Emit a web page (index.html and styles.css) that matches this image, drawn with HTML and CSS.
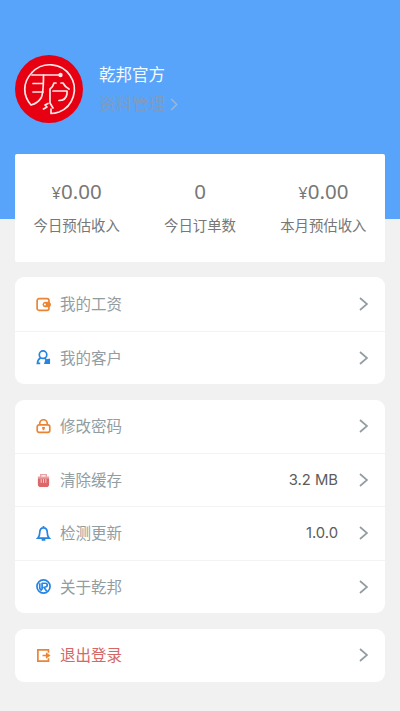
FILE: index.html
```html
<!DOCTYPE html>
<html lang="zh-CN">
<head>
<meta charset="utf-8">
<meta name="viewport" content="width=device-width, initial-scale=1">
<title>我的</title>
<link rel="stylesheet" href="styles.css">
</head>
<body>
<header class="hero">
  <svg class="avatar" viewBox="0 0 68 68" aria-hidden="true">
    <circle cx="34" cy="34" r="34" fill="#e60012"/>
    <g fill="none" stroke="#ffe9e6" stroke-width="1.7" stroke-linecap="round" stroke-linejoin="round">
      <path d="M17 17.500A24.500 24.500 0 1 1 44 57Q40 58.500 36 58.500V54"/>
      <path d="M17 17.500C7 28 8 41 16 50Q23 48 26 43Q28.500 39 28.500 20"/>
      <path d="M17 20H45M18 28.500H28M18 37H28"/>
      <path d="M41 28H39Q38 32 35 34V48L38 53M46 28H48Q50 32 54 34M38 36H52V39Q51 45.500 44 45.500"/>
      <path d="M33 48.500L30 50L32 52L28.500 54"/>
    </g>
    <circle cx="45.500" cy="20" r="2.200" fill="#ffe9e6"/>
  </svg>
  <div class="profile">
    <div class="name">乾邦官方</div>
    <div class="manage">资料管理<svg class="manage-arrow" viewBox="0 0 8 14"><path d="M1 1l6 6-6 6"/></svg></div>
  </div>
</header>
<main class="content">
  <section class="stats">
    <div class="stat"><div class="amount"><span class="yen">¥</span>0.00</div><div class="caption">今日预估收入</div></div>
    <div class="stat"><div class="amount">0</div><div class="caption">今日订单数</div></div>
    <div class="stat"><div class="amount"><span class="yen">¥</span>0.00</div><div class="caption">本月预估收入</div></div>
  </section>

  <section class="group">
    <div class="row">
      <svg class="icon orange" viewBox="0 0 16 16"><rect x="1.200" y="1.800" width="12.600" height="12.400" rx="2"/><path class="solid" d="M9.500 5H14q2 1 2 3t-2 3H9.500Q7 10.500 7 8t2.500-3z"/><circle cx="9.500" cy="8" r="1" fill="#fff" stroke="none"/></svg>
      <span class="label">我的工资</span>
      <svg class="arrow" viewBox="0 0 9 14"><path d="M1 1l7 6-7 6"/></svg>
    </div>
    <div class="row">
      <svg class="icon blue" viewBox="0 0 16 16"><circle cx="7.500" cy="5" r="4"/><path d="M5 8.200Q1.800 10 1.500 14.200H4.500M9 8.500l2 2"/><path class="solid" d="M10 10l5-1v6H8.500z"/></svg>
      <span class="label">我的客户</span>
      <svg class="arrow" viewBox="0 0 9 14"><path d="M1 1l7 6-7 6"/></svg>
    </div>
  </section>

  <section class="group">
    <div class="row">
      <svg class="icon orange" viewBox="0 0 16 16"><rect x="1.300" y="6.300" width="13.400" height="8" rx="2"/><path d="M4 6V4.800a4 4 0 0 1 8 0V6M8 8.500v3.500M6.500 9.500h3"/></svg>
      <span class="label">修改密码</span>
      <svg class="arrow" viewBox="0 0 9 14"><path d="M1 1l7 6-7 6"/></svg>
    </div>
    <div class="row">
      <svg class="icon red" viewBox="0 0 16 16"><path class="solid" d="M2 5.500h12V12q0 3-3 3H5Q2 15 2 12z"/><path class="lid" d="M2 4.500h12M5 4V1.800h6V4"/><path class="slots" d="M5.500 6.500v4M8 6.500v4M10.500 6.500v4"/></svg>
      <span class="label">清除缓存</span>
      <span class="value">3.2 MB</span>
      <svg class="arrow" viewBox="0 0 9 14"><path d="M1 1l7 6-7 6"/></svg>
    </div>
    <div class="row">
      <svg class="icon blue" viewBox="0 0 16 16"><path d="M8 0v2M2 13Q4 11 4 7Q4 2 8 2T12 7Q12 11 14 13zM6 14.800h4"/></svg>
      <span class="label">检测更新</span>
      <span class="value">1.0.0</span>
      <svg class="arrow" viewBox="0 0 9 14"><path d="M1 1l7 6-7 6"/></svg>
    </div>
    <div class="row">
      <svg class="icon blue" viewBox="0 0 16 16"><circle cx="8" cy="8" r="7"/><path d="M4 4.500V10l2 2.500M6.500 4v7.500M6.500 4.500H10q2 0 2 2T10 8.500L8.500 9l3 4"/></svg>
      <span class="label">关于乾邦</span>
      <svg class="arrow" viewBox="0 0 9 14"><path d="M1 1l7 6-7 6"/></svg>
    </div>
  </section>

  <section class="group">
    <div class="row">
      <svg class="icon orange" viewBox="0 0 16 16"><path d="M13.300 5V2H2v12h11.300v-3M7 8h6"/><path class="solid" d="M10.500 4.500L15.500 8l-5 3.500z"/></svg>
      <span class="label danger">退出登录</span>
      <svg class="arrow" viewBox="0 0 9 14"><path d="M1 1l7 6-7 6"/></svg>
    </div>
  </section>
</main>
</body>
</html>
```
FILE: styles.css
```css
* { box-sizing: border-box; }

body {
  margin: 0;
  min-height: 711px;
  background: #f1f1f1;
  font-family: Inter, "Noto Sans CJK SC", sans-serif;
}

svg { display: block; flex: none; }

.hero {
  height: 219px;
  padding: 55px 15px 0;
  display: flex;
  align-items: flex-start;
  background: #57a4fa;
}

.avatar { width: 68px; height: 68px; }

.profile { margin: 8px 0 0 16px; }

.name {
  height: 24px;
  font-size: 16.5px;
  line-height: 24px;
  color: #f4faff;
}

.manage {
  display: flex;
  align-items: center;
  height: 24px;
  margin-top: 5px;
  font-size: 16.5px;
  line-height: 24px;
  color: #7d9cc4;
}

.manage-arrow {
  width: 8px;
  height: 13px;
  margin-left: 5px;
  fill: none;
  stroke: #a0b6d0;
  stroke-width: 1.6;
}

.content {
  margin-top: -65px;
  padding: 0 15px;
}

.stats {
  height: 108px;
  padding-top: 24px;
  display: grid;
  grid-template-columns: repeat(3, 1fr);
  border-radius: 2px;
  background: #fff;
  text-align: center;
}

.amount {
  height: 26px;
  font-family: "Noto Sans", sans-serif;
  font-size: 20.5px;
  line-height: 26px;
  color: #777;
}

.yen { font-size: 16.5px; }

.caption {
  height: 22px;
  margin-top: 11px;
  font-size: 14.4px;
  line-height: 22px;
  color: #777;
  white-space: nowrap;
}

.group {
  margin-top: 15.7px;
  border-radius: 9px;
  background: #fff;
}

.stats + .group { margin-top: 15.4px; }

.row {
  height: 53.3px;
  padding: 0 17px 0 21px;
  display: flex;
  align-items: center;
}

.row + .row { border-top: 1.5px solid #f3f3f3; }

.icon {
  width: 15px;
  height: 15px;
  margin-right: 9px;
  fill: none;
  stroke: currentColor;
  stroke-width: 1.8;
}

.solid { fill: currentColor; stroke: none; }
.orange { color: #e98535; }
.blue { color: #2585e3; }
.red { color: #dc6668; }
.lid { stroke: #e8a0a2; stroke-width: 1.4; }
.slots { stroke: #f7d4d4; stroke-width: 1; }

.label {
  height: 24px;
  margin-right: auto;
  padding-top: 1px;
  font-size: 15.5px;
  line-height: 24px;
  color: #929da2;
}

.danger { color: #d36868; }

.value {
  margin-right: 21px;
  font-size: 14.8px;
  color: #5c5c5c;
}

.arrow {
  width: 9px;
  height: 14px;
  fill: none;
  stroke: #929da2;
  stroke-width: 1.7;
}
```
